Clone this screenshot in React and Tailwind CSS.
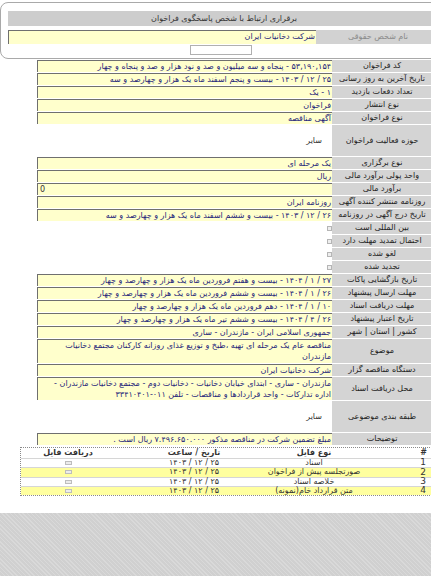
import React from 'react'

const FONT = { fontFamily: '"DejaVu Sans", Tahoma, sans-serif' }

const Row = ({ label, h = 'h-[13px]', box = true, check = false, children }) => {
  return (
    <div className={`flex ${h}`}>
      <div className="w-[100px] shrink-0 flex items-center justify-center bg-[#d4d4d4] border-b border-white text-[#222]">
        <span className="shrink-0 whitespace-nowrap">{label}</span>
      </div>
      <div className="w-[295px] shrink-0 pb-px">
        {box && (
          <div className="h-full border-t border-l border-[#6f6f6f] bg-[#ffffcc] text-[#25257a] pr-[1px] leading-[11px] overflow-hidden">
            {children}
          </div>
        )}
        {check && (
          <div className="h-full flex items-center">
            <div className="w-[5px] h-[5px] border border-[#b5b5b5] bg-[#eeeeee]" />
          </div>
        )}
        {!box && !check && (
          <div className="h-full flex items-center pr-[10px] text-[#333]">{children}</div>
        )}
      </div>
    </div>
  )
}

const files = [
  { n: '1', type: 'اسناد', date: '۲۵ / ۱۲ / ۱۴۰۳', y: false },
  { n: '2', type: 'صورتجلسه پیش از فراخوان', date: '۲۵ / ۱۲ / ۱۴۰۳', y: true },
  { n: '3', type: 'خلاصه اسناد', date: '۲۵ / ۱۲ / ۱۴۰۳', y: false },
  { n: '4', type: 'متن قرارداد خام(نمونه)', date: '۲۵ / ۱۲ / ۱۴۰۳', y: true },
]

export default function App() {
  return (
    <div className="w-[431px] h-[576px] overflow-hidden bg-white flex flex-col text-[8px]" style={FONT}>
      {/* top contact panel */}
      <div className="pt-[2px]">
        <div className="w-[448px] h-[57px] border border-[#a9a9a9] rounded-[8px] px-[7px] pt-[8px]">
          <div dir="rtl" className="h-[15px] bg-[#cdcdcd] flex items-center justify-center text-[#333]">
            <span className="shrink-0 whitespace-nowrap">برقراری ارتباط با شخص پاسخگوی فراخوان</span>
          </div>
          <div dir="rtl" className="flex h-[14px] mt-[4px]">
            <div className="w-[124px] shrink-0 bg-[#d2d2d2] flex items-center justify-center text-[#8a8a8a]">
              <span className="whitespace-nowrap">نام شخص حقوقی</span>
            </div>
            <div className="flex-1 border-t border-l border-[#6f6f6f] bg-[#ffffcc] text-[#25257a] leading-[12px] pr-[1px]">
              شرکت دخانیات ایران
            </div>
          </div>
          <div className="w-[62px] h-[10px] mt-px ml-[182px] border border-[#b0b0b0] bg-white" />
        </div>
      </div>

      {/* main info table */}
      <div dir="rtl" className="w-[432px] mt-px">
        <Row label="کد فراخوان">۵۳,۱۹۰,۱۵۴ - پنجاه و سه میلیون و صد و نود هزار و صد و پنجاه و چهار</Row>
        <Row label="تاریخ آخرین به روز رسانی">۲۵ / ۱۲ / ۱۴۰۳ - بیست و پنجم اسفند ماه یک هزار و چهارصد و سه</Row>
        <Row label="تعداد دفعات بازدید">۱ - یک</Row>
        <Row label="نوع انتشار">فراخوان</Row>
        <Row label="نوع فراخوان">آگهی مناقصه</Row>
        <Row label="حوزه فعالیت فراخوان" h="h-[32px]" box={false}>سایر</Row>
        <Row label="نوع برگزاری">یک مرحله ای</Row>
        <Row label="واحد پولی برآورد مالی">ریال</Row>
        <Row label="برآورد مالی">
          <div dir="ltr" className="text-left pl-[2px] text-[#333]">0</div>
        </Row>
        <Row label="روزنامه منتشر کننده آگهی">روزنامه ایران</Row>
        <Row label="تاریخ درج آگهی در روزنامه">۲۶ / ۱۲ / ۱۴۰۳ - بیست و ششم اسفند ماه یک هزار و چهارصد و سه</Row>
        <Row label="بین المللی است" box={false} check />
        <Row label="احتمال تمدید مهلت دارد" box={false} check />
        <Row label="لغو شده" box={false} check />
        <Row label="تجدید شده" box={false} check />
        <Row label="تاریخ بازگشایی پاکات">۲۷ / ۱ / ۱۴۰۴ - بیست و هفتم فروردین ماه یک هزار و چهارصد و چهار</Row>
        <Row label="مهلت ارسال پیشنهاد">۲۶ / ۱ / ۱۴۰۴ - بیست و ششم فروردین ماه یک هزار و چهارصد و چهار</Row>
        <Row label="مهلت دریافت اسناد">۱۰ / ۱ / ۱۴۰۴ - دهم فروردین ماه یک هزار و چهارصد و چهار</Row>
        <Row label="تاریخ اعتبار پیشنهاد">۲۶ / ۴ / ۱۴۰۴ - بیست و ششم تیر ماه یک هزار و چهارصد و چهار</Row>
        <Row label="کشور | استان | شهر">جمهوری اسلامی ایران - مازندران - ساری</Row>
        <Row label="موضوع" h="h-[25px]">
          مناقصه عام یک مرحله ای تهیه ،طبخ و توزیع غذای روزانه کارکنان مجتمع دخانیات مازندران
        </Row>
        <Row label="دستگاه مناقصه گزار">شرکت دخانیات ایران</Row>
        <Row label="محل دریافت اسناد" h="h-[24px]">
          مازندران - ساری - ابتدای خیابان دخانیات - دخانیات دوم - مجتمع دخانیات مازندران - اداره تدارکات - واحد قراردادها و مناقصات - تلفن ۰۱۱-۳۳۴۱۰۴۰۱
        </Row>
        <Row label="طبقه بندی موضوعی" h="h-[32px]" box={false}>سایر</Row>
        <Row label="توضیحات">مبلغ تضمین شرکت در مناقصه مذکور ۷.۴۹۶.۶۵۰.۰۰۰ ریال است .</Row>
      </div>

      {/* files table */}
      <div dir="rtl" className="w-[412px] ml-[20px] mt-px border border-dotted border-[#8a8a8a] text-[#333]">
        <div className="flex h-[10px] items-center font-bold">
          <div className="w-[76px] pr-[4px]">#</div>
          <div className="w-[82px] flex justify-center"><span className="shrink-0 whitespace-nowrap">نوع فایل</span></div>
          <div className="w-[158px] text-center">تاریخ / ساعت</div>
          <div className="flex-1 text-center">دریافت فایل</div>
        </div>
        {files.map((f) => (
          <div
            key={f.n}
            className={`flex h-[9.25px] items-center border-t border-[#d6d6d6] ${f.y ? 'bg-[#ffff9f]' : 'bg-white'}`}
          >
            <div className="w-[76px] pr-[5px] text-[9px]">{f.n}</div>
            <div className="w-[82px] flex justify-center"><span className="shrink-0 whitespace-nowrap">{f.type}</span></div>
            <div className="w-[158px] text-center">{f.date}</div>
            <div className="flex-1 flex justify-center">
              <div className="w-[7px] h-[4px] border border-[#bdbdbd] bg-[#ececec]" />
            </div>
          </div>
        ))}
      </div>

      <div className="flex-1 mt-[17px] bg-[#d5d5d5] bg-[repeating-linear-gradient(45deg,#d9d9d9_0px,#d9d9d9_1px,#d0d0d0_1px,#d0d0d0_3px)]" />
    </div>
  )
}
